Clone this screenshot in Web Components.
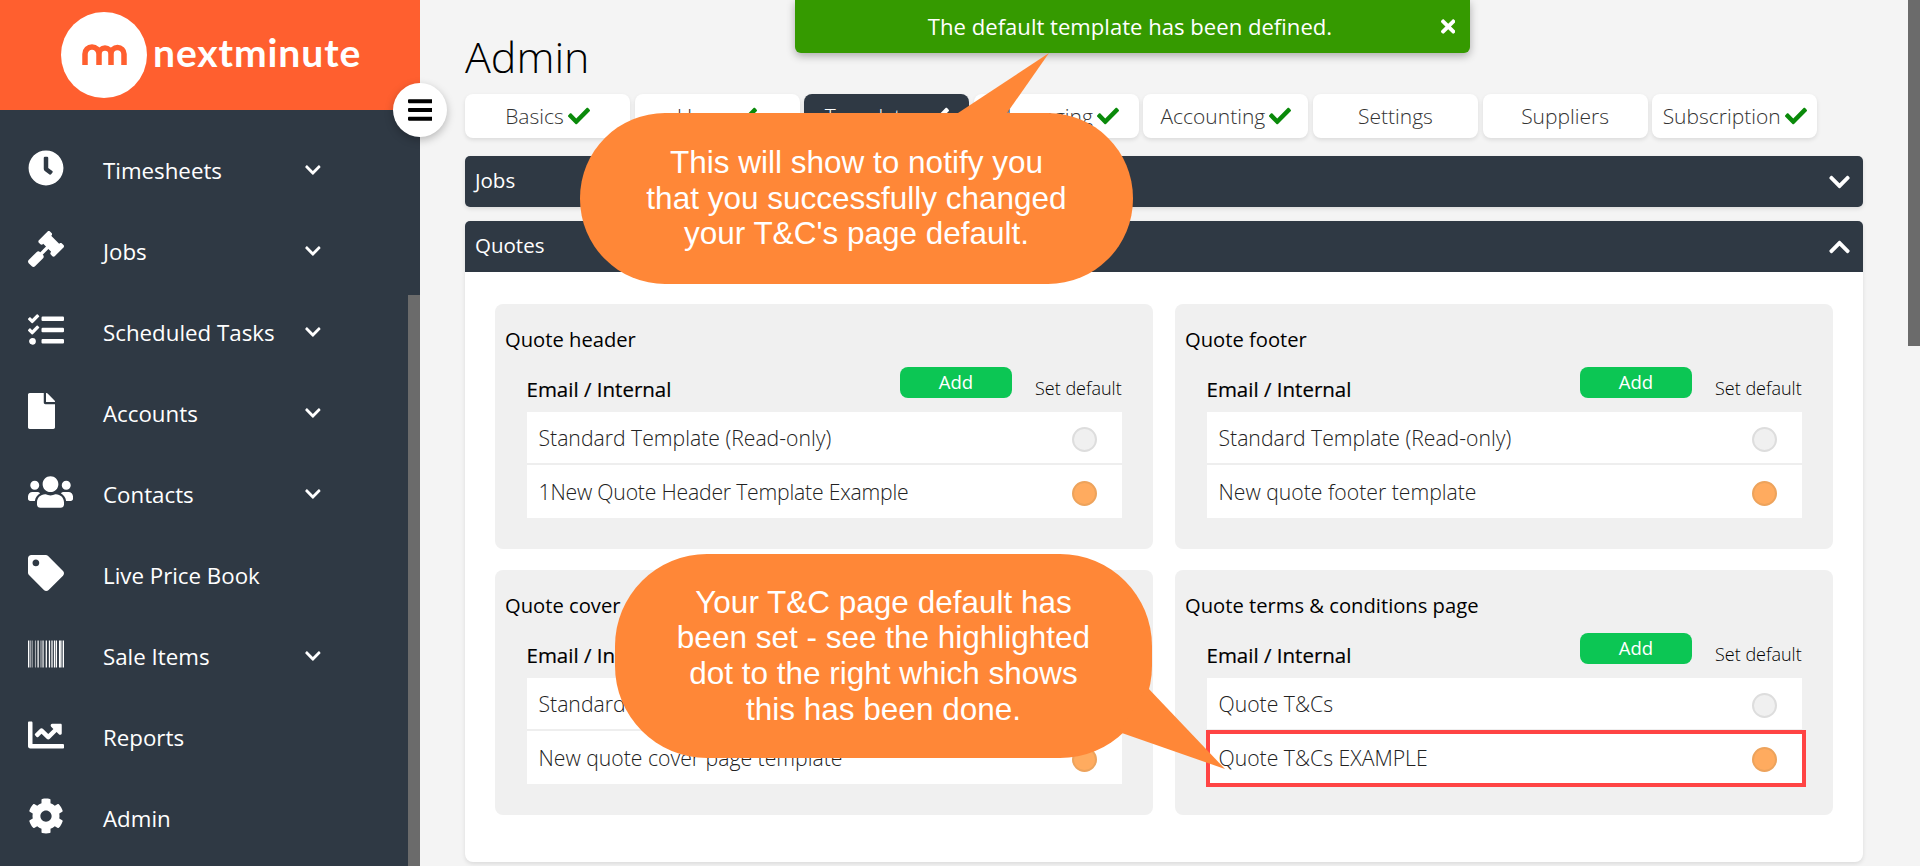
<!DOCTYPE html>
<html>
<head>
<meta charset="utf-8">
<title>Admin</title>
<style>
html, body { margin: 0; height: 100%; overflow: hidden; }
body { font-family: "Open Sans", "Noto Sans", sans-serif; background: #f4f4f4; }
</style>
</head>
<body>
<app-shell>
	<side-bar slot="side">
		<nav-item icon="clock" chevron>Timesheets</nav-item>
		<nav-item icon="gavel" chevron>Jobs</nav-item>
		<nav-item icon="tasks" chevron>Scheduled Tasks</nav-item>
		<nav-item icon="file" chevron>Accounts</nav-item>
		<nav-item icon="users" chevron>Contacts</nav-item>
		<nav-item icon="tag">Live Price Book</nav-item>
		<nav-item icon="barcode" chevron>Sale Items</nav-item>
		<nav-item icon="chart">Reports</nav-item>
		<nav-item icon="cog">Admin</nav-item>
	</side-bar>

	<h-title>Admin</h-title>
	<tab-bar>
		<tab-item check>Basics</tab-item>
		<tab-item check>Users</tab-item>
		<tab-item check active>Templates</tab-item>
		<tab-item check>Messaging</tab-item>
		<tab-item check>Accounting</tab-item>
		<tab-item>Settings</tab-item>
		<tab-item>Suppliers</tab-item>
		<tab-item check>Subscription</tab-item>
	</tab-bar>
	<acc-bar>Jobs</acc-bar>
	<acc-bar open>Quotes</acc-bar>
	<acc-panel>
		<tpl-card heading="Quote header">
			<tpl-row>Standard Template (Read-only)</tpl-row>
			<tpl-row on style="letter-spacing:-.2px">1New Quote Header Template Example</tpl-row>
		</tpl-card>
		<tpl-card heading="Quote footer">
			<tpl-row>Standard Template (Read-only)</tpl-row>
			<tpl-row on>New quote footer template</tpl-row>
		</tpl-card>
		<tpl-card heading="Quote cover page">
			<tpl-row>Standard Template (Read-only)</tpl-row>
			<tpl-row on>New quote cover page template</tpl-row>
		</tpl-card>
		<tpl-card heading="Quote terms &amp; conditions page">
			<tpl-row>Quote T&amp;Cs</tpl-row>
			<tpl-row on mark>Quote T&amp;Cs EXAMPLE</tpl-row>
		</tpl-card>
	</acc-panel>

	<toast-msg slot="over">The default template has been defined.</toast-msg>
	<call-out slot="over" box="580,113,553,171" radius="85" tail="958,113 1049,53 1007,113">This will show to notify you<br>that you successfully changed<br>your T&amp;C's page default.</call-out>
	<call-out slot="over" box="615,554,537,204" radius="92" tail="1147,687 1225,769 1119,732">Your T&amp;C page default has<br>been set - see the highlighted<br>dot to the right which shows<br>this has been done.</call-out>
</app-shell>

<script>
const ICONS = {
	clock: [512, "M256,8C119,8,8,119,8,256S119,504,256,504,504,393,504,256,393,8,256,8Zm92.49,313h0l-20,25a16,16,0,0,1-22.49,2.5h0l-67-49.72a40,40,0,0,1-15-31.23V112a16,16,0,0,1,16-16h32a16,16,0,0,1,16,16V256l58,42.5A16,16,0,0,1,348.49,321Z"],
	gavel: [512, "M504.971 199.362l-22.627-22.627c-9.373-9.373-24.569-9.373-33.941 0l-5.657 5.657L329.608 69.255l5.657-5.657c9.373-9.373 9.373-24.569 0-33.941L312.638 7.029c-9.373-9.373-24.569-9.373-33.941 0L154.246 131.48c-9.373 9.373-9.373 24.569 0 33.941l22.627 22.627c9.373 9.373 24.569 9.373 33.941 0l5.657-5.657 39.598 39.598-81.04 81.04-5.657-5.657c-12.497-12.497-32.758-12.497-45.255 0L9.373 412.118c-12.497 12.497-12.497 32.758 0 45.255l45.255 45.255c12.497 12.497 32.758 12.497 45.255 0l114.745-114.745c12.497-12.497 12.497-32.758 0-45.255l-5.657-5.657 81.04-81.04 39.598 39.598-5.657 5.657c-9.373 9.373-9.373 24.569 0 33.941l22.627 22.627c9.373 9.373 24.569 9.373 33.941 0l124.451-124.451c9.372-9.372 9.372-24.568 0-33.941z"],
	tasks: [512, "M139.61 35.5a12 12 0 0 0-17 0L58.93 98.81l-22.7-22.12a12 12 0 0 0-17 0L3.53 92.41a12 12 0 0 0 0 17l47.59 47.4a12.78 12.78 0 0 0 17.61 0l15.59-15.62L156.52 69a12.09 12.09 0 0 0 .09-17zm0 159.19a12 12 0 0 0-17 0l-63.68 63.72-22.7-22.1a12 12 0 0 0-17 0L3.53 252a12 12 0 0 0 0 17L51 316.5a12.77 12.77 0 0 0 17.6 0l15.7-15.69 72.2-72.22a12 12 0 0 0 .09-16.9zM64 368c-26.49 0-48.59 21.5-48.59 48S37.53 464 64 464a48 48 0 0 0 0-96zm432 16H208a16 16 0 0 0-16 16v32a16 16 0 0 0 16 16h288a16 16 0 0 0 16-16v-32a16 16 0 0 0-16-16zm0-320H208a16 16 0 0 0-16 16v32a16 16 0 0 0 16 16h288a16 16 0 0 0 16-16V80a16 16 0 0 0-16-16zm0 160H208a16 16 0 0 0-16 16v32a16 16 0 0 0 16 16h288a16 16 0 0 0 16-16v-32a16 16 0 0 0-16-16z"],
	file: [384, "M224 136V0H24C10.7 0 0 10.7 0 24v464c0 13.3 10.7 24 24 24h336c13.3 0 24-10.7 24-24V160H248c-13.2 0-24-10.8-24-24zm160-14.1v6.1H256V0h6.1c6.4 0 12.5 2.5 17 7l97.9 98c4.5 4.5 7 10.6 7 16.9z"],
	users: [640, "M96 224c35.3 0 64-28.7 64-64s-28.7-64-64-64-64 28.7-64 64 28.7 64 64 64zm448 0c35.3 0 64-28.7 64-64s-28.7-64-64-64-64 28.7-64 64 28.7 64 64 64zm32 32h-64c-17.6 0-33.5 7.1-45.1 18.6 40.3 22.1 68.9 62 75.1 109.4h66c17.7 0 32-14.3 32-32v-32c0-35.3-28.7-64-64-64zm-256 0c61.9 0 112-50.1 112-112S381.9 32 320 32 208 82.1 208 144s50.1 112 112 112zm76.8 32h-8.3c-20.8 10-43.9 16-68.5 16s-47.6-6-68.5-16h-8.3C179.6 288 128 339.6 128 403.2V432c0 26.5 21.5 48 48 48h288c26.5 0 48-21.5 48-48v-28.8c0-63.6-51.6-115.2-115.2-115.2zm-223.7-13.4C161.5 263.1 145.6 256 128 256H64c-35.3 0-64 28.7-64 64v32c0 17.7 14.3 32 32 32h65.9c6.3-47.4 34.9-87.3 75.2-109.4z"],
	tag: [512, "M0 252.118V48C0 21.49 21.49 0 48 0h204.118a48 48 0 0 1 33.941 14.059l211.882 211.882c18.745 18.745 18.745 49.137 0 67.882L293.823 497.941c-18.745 18.745-49.137 18.745-67.882 0L14.059 286.059A48 48 0 0 1 0 252.118zM112 64c-26.51 0-48 21.49-48 48s21.49 48 48 48 48-21.49 48-48-21.49-48-48-48z"],
	barcode: [512, "M0 448V64h18v384H0zm26.857-.273V64H36v383.727h-9.143zm27.143 0V64h8.857v383.727H54zm44.857 0V64h8.857v383.727h-8.857zm36 0V64h17.714v383.727h-17.714zm44.857 0V64h8.857v383.727h-8.857zm18 0V64h8.857v383.727h-8.857zm18 0V64h8.857v383.727h-8.857zm35.715 0V64h18v383.727h-18zm44.857 0V64h18v383.727h-18zm35.999 0V64h18.001v383.727h-18.001zm36.001 0V64h18.001v383.727h-18.001zm26.857 0V64h18v383.727h-18zm45.143 0V64h26.857v383.727h-26.857zm35.714 0V64h9.143v383.727H476zM494 448V64h18v384h-18z"],
	chart: [512, "M496 384H64V80c0-8.84-7.16-16-16-16H16C7.16 64 0 71.16 0 80v336c0 17.67 14.33 32 32 32h464c8.84 0 16-7.16 16-16v-32c0-8.84-7.16-16-16-16zM464 96H345.94c-21.38 0-32.09 25.85-16.97 40.97l32.4 32.4L288 242.75l-73.37-73.37c-12.5-12.5-32.76-12.5-45.25 0l-68.69 68.69c-6.25 6.25-6.25 16.38 0 22.63l22.62 22.62c6.25 6.25 16.38 6.25 22.63 0L192 237.25l73.37 73.37c12.5 12.5 32.76 12.5 45.25 0l96-96 32.4 32.4c15.12 15.12 40.97 4.41 40.97-16.97V112c.01-8.84-7.15-16-15.99-16z"],
	cog: [512, "M487.4 315.7l-42.6-24.6c4.3-23.2 4.3-47 0-70.2l42.6-24.6c4.9-2.8 7.1-8.6 5.5-14-11.1-35.6-30-67.8-54.7-94.6-3.8-4.1-10-5.1-14.8-2.3L380.8 110c-17.9-15.4-38.5-27.3-60.8-35.1V25.8c0-5.6-3.9-10.5-9.4-11.7-36.7-8.2-74.3-7.8-109.2 0-5.5 1.2-9.4 6.1-9.4 11.7V75c-22.2 7.9-42.8 19.8-60.8 35.1L88.7 85.5c-4.9-2.8-11-1.9-14.8 2.3-24.7 26.7-43.6 58.9-54.7 94.6-1.7 5.4.6 11.2 5.5 14L67.3 221c-4.3 23.2-4.3 47 0 70.2l-42.6 24.6c-4.9 2.8-7.1 8.6-5.5 14 11.1 35.6 30 67.8 54.7 94.6 3.8 4.1 10 5.1 14.8 2.3l42.6-24.6c17.9 15.4 38.5 27.3 60.8 35.1v49.2c0 5.6 3.9 10.5 9.4 11.7 36.7 8.2 74.3 7.8 109.2 0 5.5-1.2 9.4-6.1 9.4-11.7v-49.2c22.2-7.9 42.8-19.8 60.8-35.1l42.6 24.6c4.9 2.8 11 1.9 14.8-2.3 24.7-26.7 43.6-58.9 54.7-94.6 1.5-5.5-.7-11.3-5.6-14.1zM256 336c-44.1 0-80-35.9-80-80s35.9-80 80-80 80 35.9 80 80-35.9 80-80 80z"],
	down: [448, "M207.029 381.476L12.686 187.132c-9.373-9.373-9.373-24.569 0-33.941l22.667-22.667c9.357-9.357 24.522-9.375 33.901-.04L224 284.505l154.745-154.021c9.379-9.335 24.544-9.317 33.901.04l22.667 22.667c9.373 9.373 9.373 24.569 0 33.941L240.971 381.476c-9.373 9.372-24.569 9.372-33.942 0z"],
	up: [448, "M240.971 130.524l194.343 194.343c9.373 9.373 9.373 24.569 0 33.941l-22.667 22.667c-9.357 9.357-24.522 9.375-33.901.04L224 227.495 69.255 381.516c-9.379 9.335-24.544 9.317-33.901-.04l-22.667-22.667c-9.373-9.373-9.373-24.569 0-33.941L207.03 130.525c9.372-9.373 24.568-9.373 33.941-.001z"],
	check: [512, "M173.898 439.404l-166.4-166.4c-9.997-9.997-9.997-26.206 0-36.204l36.203-36.204c9.997-9.998 26.207-9.998 36.204 0L192 312.69 432.095 72.596c9.997-9.997 26.207-9.997 36.204 0l36.203 36.204c9.997 9.997 9.997 26.206 0 36.204l-294.4 294.401c-9.998 9.997-26.207 9.997-36.204-.001z"],
	bars: [448, "M16 132h416c8.837 0 16-7.163 16-16V76c0-8.837-7.163-16-16-16H16C7.163 60 0 67.163 0 76v40c0 8.837 7.163 16 16 16zm0 160h416c8.837 0 16-7.163 16-16v-40c0-8.837-7.163-16-16-16H16c-8.837 0-16 7.163-16 16v40c0 8.837 7.163 16 16 16zm0 160h416c8.837 0 16-7.163 16-16v-40c0-8.837-7.163-16-16-16H16c-8.837 0-16 7.163-16 16v40c0 8.837 7.163 16 16 16z"],
	times: [352, "M242.72 256l100.07-100.07c12.28-12.28 12.28-32.19 0-44.48l-22.24-22.24c-12.28-12.28-32.19-12.28-44.48 0L176 189.28 75.93 89.21c-12.28-12.28-32.19-12.28-44.48 0L9.21 111.45c-12.28 12.28-12.28 32.19 0 44.48L109.28 256 9.21 356.07c-12.28 12.28-12.28 32.19 0 44.48l22.24 22.24c12.28 12.28 32.2 12.28 44.48 0L176 322.72l100.07 100.07c12.28 12.28 32.2 12.28 44.48 0l22.24-22.24c12.28-12.28 12.28-32.19 0-44.48L242.72 256z"]
};

function icon(name, size) {
	let [w, d] = ICONS[name];
	return `<svg viewBox="0 0 ${w} 512" width="${size * w / 512}" height="${size}" fill="currentColor" style="display:block;flex:none"><path d="${d}"/></svg>`;
}

function define(tag, render) {
	customElements.define(tag, class extends HTMLElement {
		constructor() {
			super();
			this.attachShadow({mode: "open"});
		}
		connectedCallback() {
			this.shadowRoot.innerHTML = render(this);
		}
	});
}

define("app-shell", () => `
<style>
:host { display: flex; width: 1920px; height: 866px; overflow: hidden; position: relative; }
main { flex: 1; padding: 0 45px; min-width: 0; }
.scroll { flex: none; width: 12px; background: #f4f4f4; }
.scroll i { display: block; height: 346px; background: #6b6b6b; }
</style>
<slot name="side"></slot>
<main><slot></slot></main>
<div class="scroll"><i></i></div>
<slot name="over"></slot>
`);

define("side-bar", () => `
<style>
:host { display: flex; flex-direction: column; flex: none; width: 420px; height: 866px; background: #2f3944; position: relative; color: #fff; }
header { height: 110px; background: #ff5f2f; display: flex; align-items: center; padding-left: 61px; gap: 6px; box-sizing: border-box; flex: none; }
.mark { width: 86px; height: 86px; flex: none; }
.word { font: 700 39px/1 Lato, "Open Sans", sans-serif; color: #fff; letter-spacing: .9px; padding-bottom: 6px; }
nav { padding-top: 19.5px; }
.track { position: absolute; right: 0; top: 295px; bottom: 0; width: 12px; background: #6b6b6b; }
.burger { position: absolute; left: 393px; top: 83px; width: 54px; height: 54px; border-radius: 50%; background: #fff; color: #000; box-shadow: 0 3px 8px rgba(0,0,0,.25); display: flex; align-items: center; justify-content: center; z-index: 2; }
</style>
<header>
	<svg class="mark" viewBox="0 0 86 86"><circle cx="43" cy="43" r="43" fill="#fff"/><path d="M24 53V42a7 7 0 0 1 14 0V53M38 42a6 6 0 0 1 12 0V53M50 42a6.5 6.5 0 0 1 13 0V53" fill="none" stroke="#ff5f2f" stroke-width="5.5"/></svg>
	<span class="word">nextminute</span>
</header>
<nav><slot></slot></nav>
<div class="track"></div>
<div class="burger">${icon("bars", 28)}</div>
`);

define("nav-item", el => `
<style>
:host { display: flex; align-items: center; height: 81px; padding-left: 28px; font-size: 22.3px; color: #fff; }
.ic { width: 75px; flex: none; padding-bottom: 5px; }
.lb { width: 202px; flex: none; }
</style>
<div class="ic">${icon(el.getAttribute("icon"), 36)}</div>
<div class="lb"><slot></slot></div>
${el.hasAttribute("chevron") ? icon("down", 18) : ""}
`);

define("h-title", () => `
<style>
:host { display: block; height: 94px; box-sizing: border-box; padding-top: 28px; font-size: 43px; line-height: 58px; font-weight: 300; color: #000; }
</style>
<slot></slot>
`);

define("tab-bar", () => `
<style>
:host { display: flex; gap: 4.6px; margin-bottom: 18px; }
</style>
<slot></slot>
`);

define("tab-item", el => `
<style>
:host { display: flex; width: 165px; height: 44px; align-items: center; justify-content: center; gap: 4px; border-radius: 8px; background: #fff; color: #333; font-size: 21px; font-weight: 300; box-shadow: 0 2px 4px rgba(0,0,0,.1); }
:host([active]) { background: #2f3944; color: #fff; }
.ck { color: #0a8a0a; }
:host([active]) .ck { color: #fff; }
</style>
<slot></slot>
${el.hasAttribute("check") ? `<span class="ck">${icon("check", 22)}</span>` : ""}
`);

define("acc-bar", el => `
<style>
:host { display: flex; align-items: center; justify-content: space-between; height: 51px; margin-bottom: 14px; padding: 0 13px 0 10px; border-radius: 5px; background: #2f3944; color: #fff; font-size: 20.5px; box-shadow: 0 2px 4px rgba(0,0,0,.1); }
:host([open]) { margin-bottom: 0; border-radius: 5px 5px 0 0; }
span { padding-bottom: 3px; }
</style>
<span><slot></slot></span>
${icon(el.hasAttribute("open") ? "up" : "down", 24)}
`);

define("acc-panel", () => `
<style>
:host { display: grid; grid-template-columns: 658px 658px; gap: 21px 22px; height: 590px; box-sizing: border-box; padding: 32px 30px 0; background: #fff; border-radius: 0 0 8px 8px; align-content: start; box-shadow: 0 2px 4px rgba(0,0,0,.1); }
</style>
<slot></slot>
`);

define("tpl-card", el => `
<style>
:host { display: block; height: 245px; box-sizing: border-box; padding: 20px 31px 0 10px; background: #f0f0f0; border-radius: 8px; color: #000; }
h3 { margin: 0; font-size: 20.2px; font-weight: 400; line-height: 30px; height: 43px; }
.body { padding-left: 21.5px; }
.head { display: flex; align-items: flex-start; height: 45px; }
.head b { flex: 1; font-size: 20.5px; font-weight: 400; line-height: 30px; padding-top: 7px; height: 30px; -webkit-text-stroke: .2px #000; }
.add { width: 112px; height: 31px; margin-right: 23px; border-radius: 8px; background: #0cc654; color: #fff; font-size: 18.5px; line-height: 30px; text-align: center; }
.set { width: 87px; white-space: nowrap; font-size: 18px; font-weight: 300; line-height: 24px; padding-top: 9px; }
.list { background: #fff; }
</style>
<h3>${el.getAttribute("heading").replace("&", "&amp;")}</h3>
<div class="body">
	<div class="head"><b>Email / Internal</b><div class="add">Add</div><div class="set">Set default</div></div>
	<div class="list"><slot></slot></div>
</div>
`);

define("tpl-row", el => `
<style>
:host { display: flex; align-items: center; justify-content: space-between; box-sizing: border-box; height: 53px; padding: 0 25.5px 0 12px; position: relative; font-size: 21.2px; font-weight: 300; color: #222; }
:host(:first-child) { border-bottom: 2px solid #eee; }
.dot { width: 25px; height: 25px; margin-top: 3px; box-sizing: border-box; border-radius: 50%; background: #f0f0f0; border: 2px solid #ddd; }
:host([on]) .dot { background: #ffab5f; border-color: #eda35c; }
.mark { position: absolute; left: -1px; right: -4px; top: -1px; bottom: -3px; border: 4px solid #ff4444; }
</style>
<span><slot></slot></span>
<div class="dot"></div>
${el.hasAttribute("mark") ? `<div class="mark"></div>` : ""}
`);

define("toast-msg", () => `
<style>
:host { display: flex; align-items: center; justify-content: center; position: absolute; left: 795px; top: 0; width: 675px; height: 53px; box-sizing: border-box; padding: 0 5px 2px 0; border-radius: 0 0 6px 6px; background: #359a00; color: #fff; font-size: 22.1px; box-shadow: 0 3px 8px rgba(0,0,0,.3); z-index: 5; }
svg { position: absolute; right: 15px; top: 16px; }
</style>
<slot></slot>
${icon("times", 21)}
`);

define("call-out", el => {
	let [x, y, w, h] = el.getAttribute("box").split(",").map(Number);
	let r = Number(el.getAttribute("radius"));
	let pts = el.getAttribute("tail");
	let outline = `M${x + r} ${y}H${x + w - r}A${r} ${r} 0 0 1 ${x + w} ${y + r}V${y + h - r}A${r} ${r} 0 0 1 ${x + w - r} ${y + h}H${x + r}A${r} ${r} 0 0 1 ${x} ${y + h - r}V${y + r}A${r} ${r} 0 0 1 ${x + r} ${y}Z`;
	return `
<style>
:host { display: block; position: absolute; left: 0; top: 0; width: 1920px; height: 866px; z-index: 6; pointer-events: none; }
svg { position: absolute; left: 0; top: 0; }
.tx { position: absolute; left: ${x}px; top: ${y}px; width: ${w}px; height: ${h}px; display: flex; align-items: center; justify-content: center; text-align: center; color: #fff; font: 31.5px/35.6px "Liberation Sans", Arial, sans-serif; }
</style>
<svg width="1920" height="866"><path d="${outline}" fill="#ff8737"/><polygon points="${pts}" fill="#ff8737"/></svg>
<div class="tx"><div><slot></slot></div></div>`;
});
</script>
</body>
</html>
